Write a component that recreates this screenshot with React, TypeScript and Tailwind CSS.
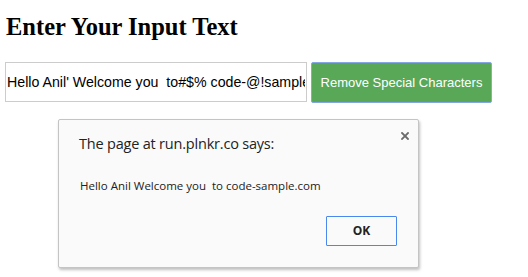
import React from 'react';

const AlertDialog: React.FC = () => {
  return (
    <div className="absolute left-[58px] top-[119px] w-[361px] h-[149px] rounded-[2px] border border-[#c4c4c4] bg-[#fafafa] shadow-[1px_2px_3px_rgba(0,0,0,0.25)] font-['Open_Sans',sans-serif]">
      <button className="absolute right-[7px] top-[10px] p-[2px] text-[#6b6b6b]" aria-label="Close">
        <svg width="8" height="8" viewBox="0 0 8 8">
          <path d="M1 1L7 7M7 1L1 7" stroke="currentColor" strokeWidth="1.8" strokeLinecap="square" />
        </svg>
      </button>
      <div className="pl-[20px] pt-[14px] text-[14.5px] leading-[20px] text-[#222] tracking-[-0.2px]">
        The page at run.plnkr.co says:
      </div>
      <div className="pl-[21px] pt-[24px] text-[11.5px] leading-[16px] text-[#222]">
        Hello Anil Welcome you&nbsp; to code-sample.com
      </div>
      <div className="flex justify-end pr-[21px] pt-[22px]">
        <button className="w-[71px] h-[30px] border border-[#4a87ee] rounded-[1px] bg-[#fafafa] text-[12px] font-bold text-[#222]">
          OK
        </button>
      </div>
    </div>
  );
};

export default function App() {
  return (
    <div className="relative w-[528px] h-[277px] bg-white overflow-hidden">
      <div className="pl-[5px]">
        <h1 className="mt-[13px] pl-px text-[24.5px] leading-[28px] font-bold text-black font-['Liberation_Serif',serif]">
          Enter Your Input Text
        </h1>
        <div className="mt-[21px] flex items-start gap-[4px] font-['Liberation_Sans',Arial,sans-serif]">
          <input
            type="text"
            readOnly
            value="Hello Anil' Welcome you  to#$% code-@!sample.com"
            className="w-[302px] h-[40px] border border-[#cccccc] px-px text-[14.2px] text-black outline-none"
          />
          <button className="w-[181px] h-[41px] rounded-[2px] border border-[#86a6e6] bg-[#58a858] shadow-[inset_0_0_0_1px_#58a858] text-[13px] text-white">
            Remove Special Characters
          </button>
        </div>
      </div>
      <AlertDialog />
    </div>
  );
}
